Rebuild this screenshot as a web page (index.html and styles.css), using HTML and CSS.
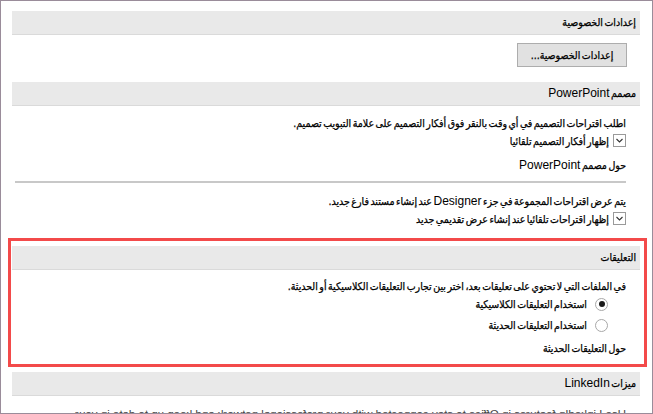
FILE: index.html
```html
<!DOCTYPE html>
<html lang="ar" dir="rtl">

<head>
    <meta charset="UTF-8">
    <title>خيارات PowerPoint</title>
    <link rel="stylesheet" href="styles.css">
</head>

<body>
    <div class="frame">
        <!-- إعدادات الخصوصية -->
        <div class="section-head">إعدادات الخصوصية</div>
        <div class="button-row">
            <button class="btn" type="button">إعدادات الخصوصية...</button>
        </div>

        <!-- مصمم PowerPoint -->
        <div class="section-head">مصمم <span class="en">PowerPoint</span></div>
        <div class="section-body designer">
            <p class="line">اطلب اقتراحات التصميم في أي وقت بالنقر فوق أفكار التصميم على علامة التبويب تصميم.</p>
            <label class="check-row">
                <span class="checkbox">
                    <svg width="11" height="11" viewBox="0 0 11 11"><polyline points="2.5,4 5.5,7 8.5,4" fill="none" stroke="#333" stroke-width="1.1"/></svg>
                </span>
                <span>إظهار أفكار التصميم تلقائيا</span>
            </label>
            <p class="line link">حول مصمم <span class="en">PowerPoint</span></p>
            <div class="separator"></div>
            <p class="line">يتم عرض اقتراحات المجموعة في جزء <span class="en">Designer</span> عند إنشاء مستند فارغ جديد.</p>
            <label class="check-row">
                <span class="checkbox">
                    <svg width="11" height="11" viewBox="0 0 11 11"><polyline points="2.5,4 5.5,7 8.5,4" fill="none" stroke="#333" stroke-width="1.1"/></svg>
                </span>
                <span>إظهار اقتراحات تلقائيا عند إنشاء عرض تقديمي جديد</span>
            </label>
        </div>

        <!-- التعليقات (مُحددة بالإطار الأحمر) -->
        <div class="highlight">
            <div class="section-head">التعليقات</div>
            <div class="section-body comments">
                <p class="line">في الملفات التي لا تحتوي على تعليقات بعد، اختر بين تجارب التعليقات الكلاسيكية أو الحديثة.</p>
                <label class="radio-row">
                    <span class="radio checked"></span>
                    <span>استخدام التعليقات الكلاسيكية</span>
                </label>
                <label class="radio-row">
                    <span class="radio"></span>
                    <span>استخدام التعليقات الحديثة</span>
                </label>
                <p class="line link">حول التعليقات الحديثة</p>
            </div>
        </div>

        <!-- ميزات LinkedIn -->
        <div class="section-head">ميزات <span class="en">LinkedIn</span></div>
        <div class="section-body linkedin">
            <p class="mirrored">Use LinkedIn features in Office to stay connected with your professional network and keep up to date in your</p>
        </div>
    </div>
</body>

</html>
```

FILE: styles.css
```css
/* عام */
body {
    margin: 0;
    font-family: 'DejaVu Sans Condensed', 'DejaVu Sans', sans-serif;
    font-size: 10.5px;
    color: #000;
    background-color: #fff;
    -webkit-text-stroke: 0.25px #000;
}

p {
    margin: 0;
}

/* النص اللاتيني داخل الأسطر العربية */
.en {
    font-family: 'Liberation Sans Narrow', 'Liberation Sans', sans-serif;
    font-size: 12px;
    -webkit-text-stroke: 0;
}

/* الإطار الخارجي */
.frame {
    width: 653px;
    height: 414px;
    box-sizing: border-box;
    border: 1px solid #9a8c9a;
    padding: 10px 12px 0 11px;
    overflow: hidden;
}

/* رؤوس الأقسام */
.section-head {
    height: 23px;
    line-height: 23px;
    background-color: #e9e9e9;
    border-bottom: 1px solid #dadada;
    padding-right: 4px;
    word-spacing: -1.5px;
}

.section-body {
    padding-right: 14px;
    word-spacing: -1.5px;
}

/* زر إعدادات الخصوصية */
.button-row {
    display: flex;
    padding: 8px 13px 15px 0;
}

.btn {
    width: 110px;
    height: 24px;
    background-color: #e1e1e1;
    border: 1px solid #adadad;
    font-family: inherit;
    font-size: 10.5px;
    word-spacing: -1.5px;
    color: #000;
    padding: 0;
}

/* الأسطر */
.line {
    height: 17px;
    line-height: 17px;
}

.designer {
    padding-top: 9px;
}

.link {
    margin-top: 8px;
}

.separator {
    height: 2px;
    background-color: #c8c8c8;
    margin: 7px 0 10px 3px;
}

/* مربعات الاختيار */
.check-row {
    display: flex;
    align-items: center;
    gap: 4px;
    height: 17px;
}

.checkbox {
    width: 11px;
    height: 11px;
    border: 1px solid #9a9a9a;
    display: flex;
    background-color: #fff;
}

/* الإطار الأحمر */
.highlight {
    margin: 11px -7px 5px -4px;
    border: 3px solid #f34a4a;
    padding: 5px 4px 7px 1px;
}

.comments {
    padding-top: 8px;
}

.radio-row {
    display: flex;
    align-items: center;
    gap: 8px;
    height: 18px;
    padding-right: 18px;
}

.radio-row + .radio-row {
    margin-top: 3px;
}

.radio {
    width: 11px;
    height: 11px;
    border: 1px solid #a8a8a8;
    border-radius: 50%;
    display: flex;
    align-items: center;
    justify-content: center;
}

.radio.checked::after {
    content: "";
    width: 6px;
    height: 6px;
    border-radius: 50%;
    background-color: #1a1a1a;
}

.comments .link {
    margin-top: 6px;
}

/* LinkedIn */
.linkedin {
    overflow: hidden;
}

.mirrored {
    margin-top: 12px;
    font-family: 'Liberation Sans', sans-serif;
    font-size: 11.5px;
    color: #444;
    -webkit-text-stroke: 0;
    transform: scaleX(-1);
    direction: ltr;
    text-align: left;
    white-space: nowrap;
    word-spacing: 0;
}
```
